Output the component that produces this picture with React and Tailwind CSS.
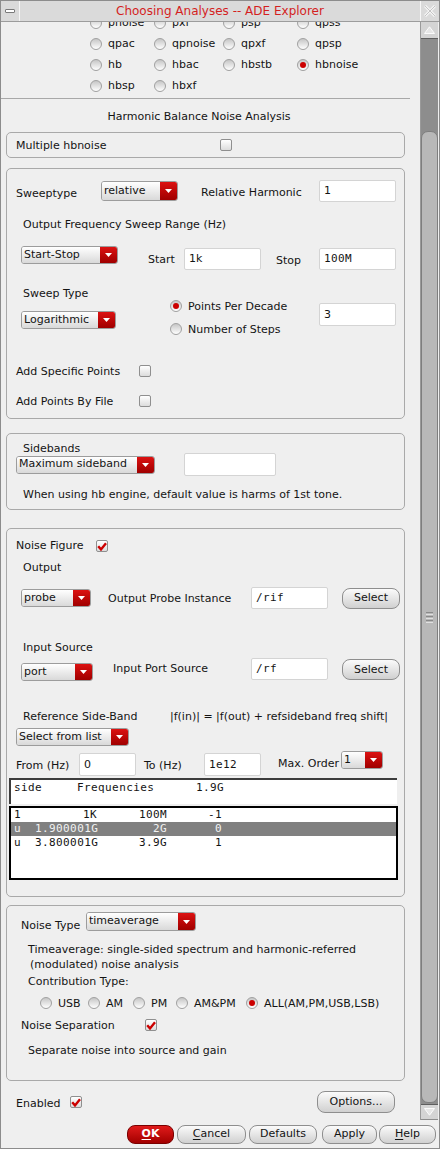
import React from 'react'

const Radio = ({ checked }) => (
  <span className="w-[12px] h-[12px] rounded-full border border-[#a0a0a0] bg-linear-to-b from-[#c6c6c6] to-white flex items-center justify-center shrink-0">
    {checked && <span className="w-[6px] h-[6px] rounded-full bg-[#cc0000]" />}
  </span>
)

const Checkbox = ({ checked }) => (
  <span className="w-[12px] h-[12px] rounded-[2px] border border-[#8f8f8f] bg-linear-to-b from-white to-[#dcdcdc] flex items-center justify-center shrink-0">
    {checked && (
      <svg width="10" height="9" viewBox="0 0 10 9">
        <path d="M1.2 4.2 L4 7.4 L9 1.2" fill="none" stroke="#cc0000" strokeWidth="2.4" />
      </svg>
    )}
  </span>
)

const Dropdown = ({ label, className }) => (
  <div className={`flex rounded-[3px] border border-[#9c9c9c] overflow-hidden shrink-0 ${className}`}>
    <div className="flex-1 bg-linear-to-b from-white to-[#d9d9d9] pl-[2px] flex items-center whitespace-nowrap overflow-hidden">
      {label}
    </div>
    <div className="w-[17px] bg-linear-to-b from-[#dc1212] to-[#a00000] flex items-center justify-center">
      <svg width="7" height="4" viewBox="0 0 7 4">
        <path d="M0 0 H7 L3.5 4 Z" fill="white" />
      </svg>
    </div>
  </div>
)

const Field = ({ value, className, mono }) => (
  <div
    className={`bg-white border border-[#d4d4d4] rounded-[2px] flex items-center pl-[4px] pt-[1px] shrink-0 ${
      mono ? "font-['DejaVu_Sans_Mono',monospace] tracking-[0.4px]" : ''
    } ${className}`}
  >
    {value}
  </div>
)

const Btn = ({ children, className }) => (
  <div
    className={`flex items-center justify-center rounded-[8px] border border-[#8e8e8e] bg-linear-to-b from-[#fbfbfb] to-[#d0d0d0] shrink-0 ${className}`}
  >
    {children}
  </div>
)

const Box = ({ className, children }) => (
  <div className={`ml-[5px] w-[399px] rounded-[5px] border border-[#a9a9a9] flex flex-col shrink-0 ${className}`}>
    {children}
  </div>
)

// text line, nudged 1px down so the glyphs sit where the reference has them
const Text = ({ className, children }) => (
  <div className={`h-[16px] leading-[16px] pt-[1px] whitespace-nowrap shrink-0 ${className}`}>{children}</div>
)

const topRadios = [
  ['pnoise', 'pxf', 'psp', 'qpss'],
  ['qpac', 'qpnoise', 'qpxf', 'qpsp'],
  ['hb', 'hbac', 'hbstb', 'hbnoise'],
  ['hbsp', 'hbxf'],
]
const colWidths = ['w-[64px]', 'w-[69px]', 'w-[74px]', 'w-[80px]']

const listRows = [
  ['1', '1K', '100M', '-1'],
  ['u', '1.900001G', '2G', '0'],
  ['u', '3.800001G', '3.9G', '1'],
]

const contribution = [
  ['USB', 'w-[48px]'],
  ['AM', 'w-[45px]'],
  ['PM', 'w-[43px]'],
  ['AM&PM', 'w-[70px]'],
  ['ALL(AM,PM,USB,LSB)', 'w-[130px]'],
]

export default function App() {
  return (
    <div className="w-[440px] h-[1149px] bg-[#efefef] border border-[#8c8c8c] flex flex-col overflow-hidden font-['DejaVu_Sans',sans-serif] text-[11px] text-[#141414]">
      {/* title bar */}
      <div className="h-[21px] flex bg-[#dadada] border-b border-[#9c9c9c] shrink-0">
        <div className="w-[19px] border-r border-[#f6f6f6] flex items-center justify-center">
          <span className="w-[10px] h-[4px] border border-[#7a7a7a] bg-white rounded-[1px]" />
        </div>
        <div className="flex-1 text-center leading-[21px] text-[12px] text-[#d41f1f]">
          Choosing Analyses -- ADE Explorer
        </div>
        <div className="w-[19px] border-l border-[#f6f6f6] flex items-center justify-center">
          <svg width="12" height="12" viewBox="0 0 12 12">
            <path d="M1 1 L11 11 M11 1 L1 11" stroke="#f4f4f4" strokeWidth="3" />
            <path d="M1 1 L11 11 M11 1 L1 11" stroke="#c4c4c4" strokeWidth="1" />
          </svg>
        </div>
      </div>

      <div className="h-[1098px] flex shrink-0">
        {/* scrolled content */}
        <div className="w-[419px] h-full overflow-hidden flex flex-col">
          <div className="-mt-[10px] flex flex-col shrink-0">
            {topRadios.map((row, i) => (
              <div key={i} className="h-[21px] flex items-center pl-[89px] pt-[1px]">
                {row.map((name, j) => (
                  <div key={name} className={`flex items-center ${colWidths[j]}`}>
                    <Radio checked={name === 'hbnoise'} />
                    <span className="ml-[6px] pt-[1px]">{name}</span>
                  </div>
                ))}
              </div>
            ))}
          </div>

          <div className="mt-[2px] h-[1px] w-[409px] bg-[#a8a8a8] shrink-0" />
          <Text className="mt-[9px] w-[396px] text-center">Harmonic Balance Noise Analysis</Text>

          <Box className="mt-[8px] h-[26px] flex-row items-center">
            <span className="ml-[9px] w-[204px] pt-[3px]">Multiple hbnoise</span>
            <Checkbox />
          </Box>

          {/* sweep */}
          <Box className="mt-[10px] h-[251px]">
            <div className="mt-[11px] h-[22px] flex items-center">
              <span className="ml-[9px] w-[85px] mt-[7px]">Sweeptype</span>
              <Dropdown label="relative" className="w-[77px] h-[20px]" />
              <span className="ml-[23px] w-[118px] mt-[4px]">Relative Harmonic</span>
              <Field value="1" className="w-[77px] h-[22px]" />
            </div>
            <Text className="mt-[14px] ml-[16px]">Output Frequency Sweep Range (Hz)</Text>
            <div className="mt-[14px] h-[24px] flex items-start">
              <Dropdown label="Start-Stop" className="ml-[14px] w-[97px] h-[18px]" />
              <Text className="ml-[30px] w-[36px] mt-[5px]">Start</Text>
              <Field value="1k" className="w-[77px] h-[22px] mt-[2px]" />
              <Text className="ml-[15px] w-[43px] mt-[6px]">Stop</Text>
              <Field value="100M" mono className="w-[77px] h-[22px] mt-[2px]" />
            </div>
            <Text className="mt-[15px] ml-[16px]">Sweep Type</Text>
            <div className="-mt-[4px] h-[41px] flex items-start">
              <Dropdown label="Logarithmic" className="ml-[14px] mt-[14px] w-[95px] h-[18px]" />
              <div className="ml-[54px] w-[149px] flex flex-col">
                <div className="h-[18px] flex items-center">
                  <Radio checked />
                  <span className="ml-[6px] pt-[2px]">Points Per Decade</span>
                </div>
                <div className="mt-[5px] h-[18px] flex items-center">
                  <Radio />
                  <span className="ml-[6px] pt-[2px]">Number of Steps</span>
                </div>
              </div>
              <Field value="3" className="mt-[6px] w-[77px] h-[23px]" />
            </div>
            <div className="mt-[25px] h-[16px] flex items-center">
              <span className="ml-[9px] w-[123px] pt-[2px]">Add Specific Points</span>
              <Checkbox />
            </div>
            <div className="mt-[14px] h-[16px] flex items-center">
              <span className="ml-[9px] w-[123px] pt-[2px]">Add Points By File</span>
              <Checkbox />
            </div>
          </Box>

          {/* sidebands */}
          <Box className="mt-[14px] h-[77px]">
            <div className="mt-[6px] ml-[16px] h-[13px] leading-[18px] shrink-0">Sidebands</div>
            <div className="h-[23px] flex items-center shrink-0">
              <Dropdown label="Maximum sideband" className="ml-[9px] w-[139px] h-[18px]" />
              <Field value="" className="ml-[29px] w-[92px] h-[23px]" />
            </div>
            <Text className="mt-[10px] ml-[16px]">When using hb engine, default value is harms of 1st tone.</Text>
          </Box>

          {/* noise figure */}
          <Box className="mt-[18px] h-[369px]">
            <div className="mt-[9px] h-[16px] flex items-center shrink-0">
              <span className="ml-[9px] w-[80px] pt-[1px]">Noise Figure</span>
              <Checkbox checked />
            </div>
            <Text className="mt-[5px] ml-[16px]">Output</Text>
            <div className="mt-[12px] h-[22px] flex items-center shrink-0">
              <Dropdown label="probe" className="ml-[14px] w-[70px] h-[18px]" />
              <span className="ml-[17px] w-[143px] pt-[2px]">Output Probe Instance</span>
              <Field value="/rif" mono className="w-[77px] h-[22px]" />
              <Btn className="ml-[14px] w-[58px] h-[21px] pt-[1px]">Select</Btn>
            </div>
            <Text className="mt-[30px] ml-[16px]">Input Source</Text>
            <div className="mt-[3px] h-[23px] flex items-start shrink-0">
              <Dropdown label="port" className="ml-[14px] mt-[5px] w-[72px] h-[18px]" />
              <Text className="ml-[20px] w-[138px] mt-[2px]">Input Port Source</Text>
              <Field value="/rf" mono className="w-[77px] h-[22px]" />
              <Btn className="ml-[14px] mt-[1px] w-[58px] h-[21px] pt-[1px]">Select</Btn>
            </div>
            <div className="mt-[27px] h-[16px] leading-[16px] pt-[1px] flex whitespace-nowrap shrink-0">
              <span className="ml-[16px] w-[147px]">Reference Side-Band</span>
              <span>|f(in)| = |f(out) + refsideband freq shift|</span>
            </div>
            <Dropdown label="Select from list" className="mt-[4px] ml-[9px] w-[113px] h-[18px]" />
            <div className="mt-[5px] h-[25px] flex items-start shrink-0">
              <Text className="ml-[9px] w-[63px] mt-[6px]">From (Hz)</Text>
              <Field value="0" className="mt-[2px] w-[57px] h-[23px]" />
              <Text className="ml-[8px] w-[60px] mt-[6px]">To (Hz)</Text>
              <Field value="1e12" mono className="mt-[2px] w-[57px] h-[23px]" />
              <Text className="ml-[17px] w-[63px] mt-[4px]">Max. Order</Text>
              <Dropdown label="1" className="w-[42px] h-[18px]" />
            </div>
            <div className="mt-[2px] ml-[2px] w-[388px] h-[26px] bg-white border-t-2 border-l-2 border-[#3c3c3c] flex pl-[3px] leading-[16px] whitespace-pre font-['DejaVu_Sans_Mono',monospace] tracking-[0.4px] shrink-0">
              <span className="w-[63px]">side</span>
              <span className="w-[119px]">Frequencies</span>
              <span>1.9G</span>
            </div>
            <div className="mt-[2px] ml-[2px] w-[389px] h-[74px] bg-white border-2 border-black flex flex-col font-['DejaVu_Sans_Mono',monospace] tracking-[0.4px] shrink-0">
              {listRows.map((r, i) => (
                <div
                  key={i}
                  className={`h-[14px] leading-[14px] flex pl-[3px] ${i === 1 ? 'bg-[#808080] text-[#f2f2f2]' : ''}`}
                >
                  <span className="w-[21px]">{r[0]}</span>
                  <span className="w-[62px] text-right">{r[1]}</span>
                  <span className="w-[70px] text-right">{r[2]}</span>
                  <span className="w-[55px] text-right">{r[3]}</span>
                </div>
              ))}
            </div>
          </Box>

          {/* noise type */}
          <Box className="mt-[8px] h-[176px]">
            <div className="mt-[6px] h-[19px] flex items-start shrink-0">
              <Text className="ml-[14px] w-[65px] mt-[5px]">Noise Type</Text>
              <Dropdown label="timeaverage" className="w-[110px] h-[19px]" />
            </div>
            <Text className="mt-[10px] ml-[21px]">Timeaverage: single-sided spectrum and harmonic-referred</Text>
            <Text className="-mt-[1px] ml-[23px]">(modulated) noise analysis</Text>
            <Text className="mt-[1px] ml-[21px]">Contribution Type:</Text>
            <div className="mt-[6px] ml-[33px] h-[16px] flex items-center shrink-0">
              {contribution.map(([name, w]) => (
                <div key={name} className={`flex items-center ${w}`}>
                  <Radio checked={name.startsWith('ALL')} />
                  <span className="ml-[6px] pt-[3px] whitespace-nowrap">{name}</span>
                </div>
              ))}
            </div>
            <div className="mt-[6px] h-[16px] flex items-center shrink-0">
              <span className="ml-[14px] w-[124px] pt-[2px]">Noise Separation</span>
              <Checkbox checked />
            </div>
            <Text className="mt-[9px] ml-[21px]">Separate noise into source and gain</Text>
          </Box>

          <div className="mt-[10px] h-[22px] flex items-center shrink-0">
            <span className="ml-[15px] w-[54px] pt-[4px]">Enabled</span>
            <Checkbox checked />
            <Btn className="ml-auto mr-[25px] w-[78px] h-[22px] pt-[1px]">Options...</Btn>
          </div>
        </div>

        {/* scrollbar */}
        <div className="w-[18px] h-full bg-[#8d8d8d] flex flex-col border-l border-[#9a9a9a]">
          <div className="h-[17px] bg-[#d4d4d4] border-b border-[#5e5e5e] flex items-center justify-center shrink-0">
            <svg width="11" height="8" viewBox="0 0 11 8">
              <path d="M0.5 7.5 L5.5 0.8 L10.5 7.5 Z" fill="#e6e6e6" stroke="#fbfbfb" strokeWidth="1" />
            </svg>
          </div>
          <div className="h-[92px] shrink-0" />
          <div className="h-[972px] rounded-[7px] bg-[#b8b8b8] border border-[#7e7e7e] flex flex-col items-center justify-center gap-[1px] shrink-0">
            <span className="w-[7px] h-[1px] bg-[#8a8a8a]" />
            <span className="w-[7px] h-[1px] bg-[#e0e0e0]" />
            <span className="w-[7px] h-[1px] bg-[#8a8a8a]" />
            <span className="w-[7px] h-[1px] bg-[#e0e0e0]" />
            <span className="w-[7px] h-[1px] bg-[#8a8a8a]" />
            <span className="w-[7px] h-[1px] bg-[#e0e0e0]" />
          </div>
          <div className="h-[1px] shrink-0" />
          <div className="h-[15px] bg-[#d4d4d4] border-t border-[#5e5e5e] flex items-center justify-center shrink-0">
            <svg width="11" height="8" viewBox="0 0 11 8">
              <path d="M0.5 0.5 L5.5 7.2 L10.5 0.5 Z" fill="#e6e6e6" stroke="#fbfbfb" strokeWidth="1" />
            </svg>
          </div>
        </div>
      </div>

      {/* dialog buttons */}
      <div className="mt-[5px] h-[19px] flex shrink-0">
        <div className="ml-[126px] w-[47px] h-[19px] rounded-[8px] border border-[#7a0000] bg-linear-to-b from-[#e01a1a] to-[#a30000] flex items-center justify-center text-white font-bold">
          <span className="underline underline-offset-2">O</span>K
        </div>
        <Btn className="ml-[3px] w-[69px] h-[19px]">
          <span className="underline underline-offset-2">C</span>ancel
        </Btn>
        <Btn className="ml-[3px] w-[68px] h-[19px]">Defaults</Btn>
        <Btn className="ml-[5px] w-[55px] h-[19px]">Apply</Btn>
        <Btn className="ml-[2px] w-[57px] h-[19px]">
          <span className="underline underline-offset-2">H</span>elp
        </Btn>
      </div>
    </div>
  )
}
